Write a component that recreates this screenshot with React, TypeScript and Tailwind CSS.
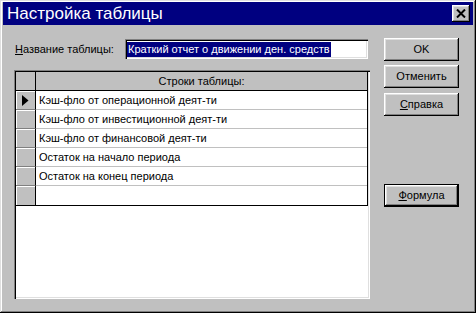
const raised =
  "shadow-[inset_-1px_-1px_0_#000,inset_1px_1px_0_#fff,inset_-2px_-2px_0_#808080,inset_2px_2px_0_#dfdfdf]";
const sunken =
  "shadow-[inset_1px_1px_0_#808080,inset_2px_2px_0_#000,inset_-1px_-1px_0_#fff,inset_-2px_-2px_0_#dfdfdf]";

const rows = [
  "Кэш-фло от операционной деят-ти",
  "Кэш-фло от инвестиционной деят-ти",
  "Кэш-фло от финансовой деят-ти",
  "Остаток на начало периода",
  "Остаток на конец периода",
  "",
];

function Button({ children, def, className }: { children: React.ReactNode; def?: boolean; className?: string }) {
  return (
    <div
      className={`h-[23px] w-[75px] flex items-center justify-center text-[11px] text-black bg-[#c0c0c0] ${
        def
          ? "shadow-[inset_0_0_0_1px_#000,inset_-2px_-2px_0_#000,inset_2px_2px_0_#fff,inset_-3px_-3px_0_#808080,inset_3px_3px_0_#dfdfdf]"
          : raised
      } ${className ?? ""}`}
    >
      {children}
    </div>
  );
}

export default function App() {
  return (
    <div className="w-[476px] h-[313px] bg-[#c0c0c0] pt-[2px] px-[3px] font-['Liberation_Sans',Arial,sans-serif] shadow-[inset_-1px_-1px_0_#000,inset_1px_1px_0_#dfdfdf,inset_-2px_-2px_0_#808080,inset_2px_2px_0_#fff] overflow-hidden">
      {/* title bar */}
      <div className="h-[23px] bg-[#000080] flex items-center justify-between pl-[4px] pr-[3px]">
        <span className="text-white text-[17px] leading-none">Настройка таблицы</span>
        <div className={`w-[18px] h-[17px] bg-[#c0c0c0] flex items-center justify-center ${raised}`}>
          <svg width="10" height="9" viewBox="0 0 10 9">
            <path d="M1 0.5 L9 8.5 M9 0.5 L1 8.5" stroke="#000" strokeWidth="2" />
          </svg>
        </div>
      </div>

      <div className="flex pl-[11px]">
        {/* left column */}
        <div className="w-[356px] pt-[14px] flex flex-col">
          <div className="h-[20px] flex items-center justify-between pl-[1px] pr-[2px]">
            <span className="text-[11px] text-black">
              <span className="underline">Н</span>азвание таблицы:
            </span>
            <div className={`w-[243px] h-[20px] bg-white pl-[2px] flex items-center ${sunken}`}>
              <span className="block h-[15px] leading-[15px] bg-[#000080] text-white text-[11px] px-[1px] whitespace-nowrap">
                Краткий отчет о движении ден. средств
              </span>
            </div>
          </div>

          <div className={`mt-[11px] h-[229px] bg-white p-[2px] ${sunken}`}>
            <div className="border-r border-b border-black">
              <div className="h-[19px] flex border-b border-black bg-[#c0c0c0]">
                <div className="w-[20px] border-r border-black" />
                <div className="flex-1 flex items-center justify-center text-[11px] text-black">Строки таблицы:</div>
              </div>
              {rows.map((r, i) => (
                <div key={i} className="h-[19px] flex">
                  <div
                    className={`w-[20px] bg-[#c0c0c0] border-r border-black flex items-center justify-center shadow-[inset_1px_1px_0_#fff] ${
                      i < rows.length - 1 ? "border-b border-b-[#808080]" : ""
                    }`}
                  >
                    {i === 0 && (
                      <svg width="7" height="11" viewBox="0 0 7 11">
                        <polygon points="0,0 6.5,5.5 0,11" fill="#000" />
                      </svg>
                    )}
                  </div>
                  <div
                    className={`flex-1 flex items-center pl-[3px] text-[11px] text-black ${
                      i < rows.length - 1 ? "border-b border-[#c0c0c0]" : ""
                    }`}
                  >
                    {r}
                  </div>
                </div>
              ))}
            </div>
          </div>
        </div>

        {/* right column */}
        <div className="ml-[14px] pt-[13px] flex flex-col">
          <Button>OK</Button>
          <Button className="mt-[4px]">Отменить</Button>
          <Button className="mt-[5px]">
            <span>
              <span className="underline">С</span>правка
            </span>
          </Button>
          <Button def className="mt-[68px]">
            <span>
              <span className="underline">Ф</span>ормула
            </span>
          </Button>
        </div>
      </div>
    </div>
  );
}
